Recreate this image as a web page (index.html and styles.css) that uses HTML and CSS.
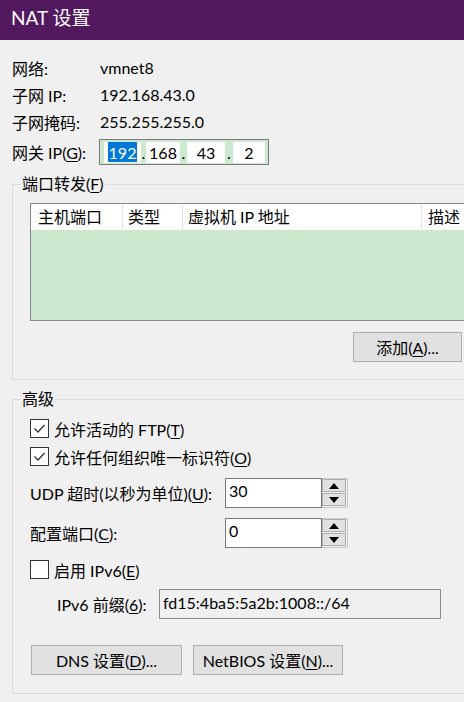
FILE: index.html
```html
<!DOCTYPE html>
<html lang="zh-CN">
<head>
<meta charset="utf-8">
<title>NAT 设置</title>
<link rel="stylesheet" href="styles.css">
</head>
<body>
<div class="titlebar">NAT 设置</div>
<div class="main">
  <div class="info">
    <span>网络:</span><span>vmnet8</span>
    <span>子网 IP:</span><span>192.168.43.0</span>
    <span>子网掩码:</span><span>255.255.255.0</span>
  </div>
  <div class="gateway">
    <span class="gw-label">网关 IP(<u>G</u>):</span>
    <div class="ipbox">
      <span class="seg s1"><span class="sel">192</span></span><span class="dot d1">.</span>
      <span class="seg s2">168</span><span class="dot d2">.</span>
      <span class="seg s3">43</span><span class="dot d3">.</span>
      <span class="seg s4">2</span>
    </div>
  </div>

  <div class="group g1">
    <span class="legend">端口转发(<u>F</u>)</span>
    <div class="table">
      <div class="thead">
        <span class="th col1">主机端口</span>
        <span class="th col2">类型</span>
        <span class="th col3">虚拟机 IP 地址</span>
        <span class="th col4">描述</span>
      </div>
      <div class="tbody"></div>
    </div>
    <div class="btnrow">
      <button class="btn add">添加(<u>A</u>)...</button>
    </div>
  </div>

  <div class="group g2">
    <span class="legend">高级</span>
    <div class="check">
      <span class="box"><svg width="17" height="17" viewBox="0 0 17 17"><polyline points="3.5,8.5 7,12 13.5,5" fill="none" stroke="#333" stroke-width="1.3"/></svg></span>
      <span>允许活动的 FTP(<u>T</u>)</span>
    </div>
    <div class="check chk2">
      <span class="box"><svg width="17" height="17" viewBox="0 0 17 17"><polyline points="3.5,8.5 7,12 13.5,5" fill="none" stroke="#333" stroke-width="1.3"/></svg></span>
      <span>允许任何组织唯一标识符(<u>O</u>)</span>
    </div>
    <div class="field udp">
      <span class="flabel">UDP 超时(以秒为单位)(<u>U</u>):</span>
      <div class="spin">
        <span class="spintext">30</span>
        <span class="spinbtns">
          <span class="sb"><svg width="10" height="6" viewBox="0 0 10 6"><polygon points="5,0 10,6 0,6" fill="#000"/></svg></span>
          <span class="sb"><svg width="10" height="6" viewBox="0 0 10 6"><polygon points="0,0 10,0 5,6" fill="#000"/></svg></span>
        </span>
      </div>
    </div>
    <div class="field port">
      <span class="flabel">配置端口(<u>C</u>):</span>
      <div class="spin">
        <span class="spintext">0</span>
        <span class="spinbtns">
          <span class="sb"><svg width="10" height="6" viewBox="0 0 10 6"><polygon points="5,0 10,6 0,6" fill="#000"/></svg></span>
          <span class="sb"><svg width="10" height="6" viewBox="0 0 10 6"><polygon points="0,0 10,0 5,6" fill="#000"/></svg></span>
        </span>
      </div>
    </div>
    <div class="check chk3">
      <span class="box"></span>
      <span>启用 IPv6(<u>E</u>)</span>
    </div>
    <div class="field ipv6">
      <span class="v6label">IPv6 前缀(<u>6</u>):</span>
      <span class="v6input">fd15:4ba5:5a2b:1008::/64</span>
    </div>
    <div class="buttons">
      <button class="btn dns">DNS 设置(<u>D</u>)...</button>
      <button class="btn netbios">NetBIOS 设置(<u>N</u>)...</button>
    </div>
  </div>
</div>
</body>
</html>
```

FILE: styles.css
```css
html, body {
  margin: 0;
  padding: 0;
}
body {
  width: 464px;
  height: 702px;
  overflow: hidden;
  background: #f0f0f0;
  font-family: Lato, "Noto Sans CJK SC", sans-serif;
  font-size: 16px;
  color: #000;
}
u { text-decoration: underline; text-underline-offset: 2px; }

.titlebar {
  height: 40px;
  background: #52195e;
  color: #fff;
  font-size: 19px;
  line-height: 36px;
  padding-left: 11px;
}

.main {
  padding: 14px 0 0 12px;
}

.info {
  display: grid;
  grid-template-columns: 88px auto;
  grid-auto-rows: 27px;
  align-items: center;
}

.gateway {
  display: flex;
  align-items: center;
  margin-top: 4px;
  height: 26px;
}
.gw-label { width: 87px; }
.ipbox {
  box-sizing: border-box;
  width: 170px;
  height: 26px;
  border: 1px solid #7a7a7a;
  background: #cce8cf;
  display: flex;
  align-items: flex-start;
  padding: 2px 0 0 4px;
}
.seg {
  height: 21px;
  line-height: 21px;
  background: #fff;
  text-align: center;
}
.s1 { width: 37px; }
.s2 { width: 34px; }
.s3 { width: 38px; }
.s4 { width: 32px; }
.sel {
  display: inline-block;
  background: #0078d7;
  color: #fff;
  height: 20px;
  padding: 0 1px;
}
.dot {
  height: 21px;
  line-height: 22px;
  text-align: center;
}
.d1 { width: 5px; }
.d2 { width: 7px; }
.d3 { width: 8px; }

.group {
  position: relative;
  width: 452px;
  border: 1px solid #dcdcdc;
  border-right: none;
  box-sizing: border-box;
}
.legend {
  position: absolute;
  top: -12px;
  left: 8px;
  padding: 0 1px;
  background: #f0f0f0;
  line-height: 22px;
}

.g1 {
  margin-top: 19px;
  padding: 18px 2px 17px 17px;
  display: flex;
  flex-direction: column;
}
.table {
  margin-right: -2px;
  border: 1px solid #828790;
  border-right: none;
  box-sizing: border-box;
  height: 118px;
  display: flex;
  flex-direction: column;
  background: #cce8cf;
}
.thead {
  display: flex;
  height: 26px;
  background: #fff;
}
.th {
  box-sizing: border-box;
  height: 26px;
  line-height: 26px;
  padding-left: 6px;
  border-right: 1px solid #e5e5e5;
  white-space: nowrap;
}
.col1 { width: 92px; padding-left: 7px; }
.col2 { width: 60px; padding-left: 5px; }
.col3 { width: 239px; padding-left: 5px; }
.col4 { flex: 1; border-right: none; }
.tbody { flex: 1; }

.btnrow {
  display: flex;
  justify-content: flex-end;
  margin-top: 11px;
}
.btn {
  box-sizing: border-box;
  height: 30px;
  background: #e1e1e1;
  border: 1px solid #adadad;
  font-family: inherit;
  font-size: 16px;
  color: #000;
  padding: 0;
  margin: 0;
}
.add { width: 109px; }

.g2 {
  margin-top: 19px;
  height: 295px;
  padding: 19px 0 0 17px;
}
.check {
  display: flex;
  align-items: center;
  gap: 5px;
  height: 19px;
  white-space: nowrap;
}
.box {
  box-sizing: border-box;
  width: 19px;
  height: 19px;
  border: 1px solid #333;
  background: #fff;
  display: flex;
  align-items: center;
  justify-content: center;
}
.chk2 { margin-top: 9px; }
.chk3 { margin-top: 12px; }

.field {
  display: flex;
  align-items: center;
  white-space: nowrap;
}
.udp { margin-top: 12px; }
.port { margin-top: 10px; }
.flabel { width: 195px; }
.spin {
  display: flex;
  height: 30px;
}
.spintext {
  box-sizing: border-box;
  width: 97px;
  height: 30px;
  border: 1px solid #7a7a7a;
  background: #fff;
  padding-left: 3px;
  line-height: 24px;
}
.spinbtns {
  box-sizing: border-box;
  width: 26px;
  height: 30px;
  border: 1px solid #c8c8c8;
  border-left: none;
  display: flex;
  flex-direction: column;
  gap: 1px;
  padding: 0 1px 1px 0;
}
.sb {
  flex: 1;
  box-sizing: border-box;
  border: 1px solid #adadad;
  background: #e1e1e1;
  display: flex;
  align-items: center;
  justify-content: center;
}

.ipv6 {
  margin-top: 10px;
  padding-left: 27px;
}
.v6label { width: 102px; }
.v6input {
  box-sizing: border-box;
  width: 282px;
  height: 30px;
  border: 1px solid #8a8a8a;
  background: #f0f0f0;
  padding-left: 3px;
  line-height: 26px;
}

.buttons {
  display: flex;
  gap: 11px;
  margin-top: 26px;
  margin-left: 1px;
}
.dns { width: 151px; }
.netbios { width: 150px; }
```
